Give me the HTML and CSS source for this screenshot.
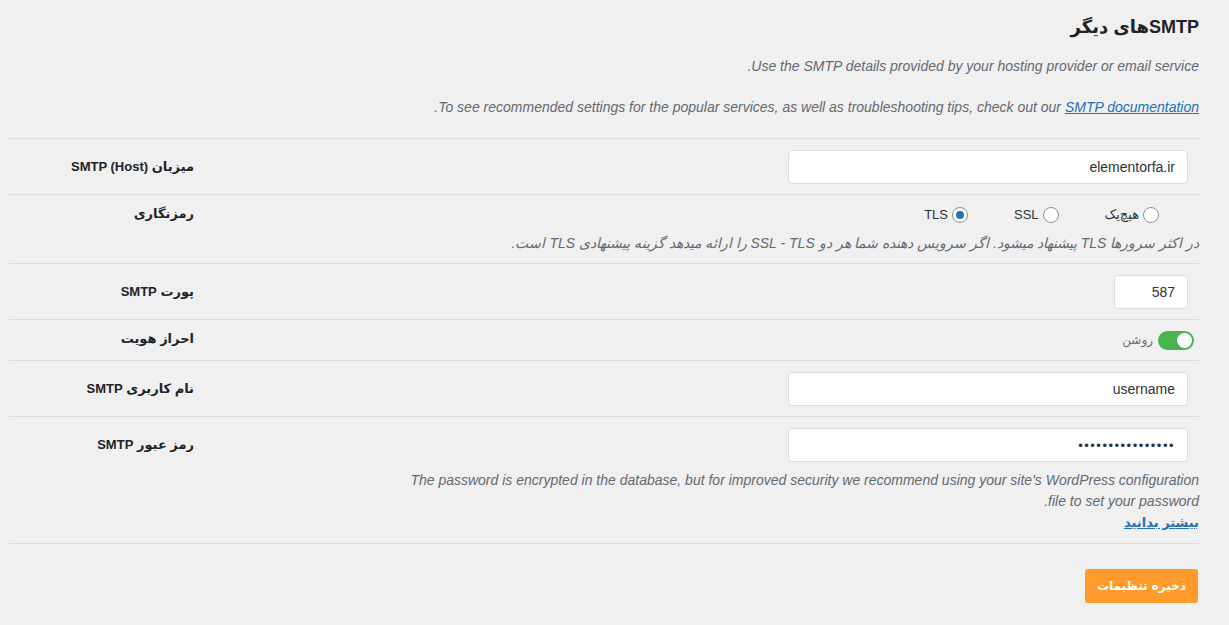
FILE: index.html
```html
<!DOCTYPE html>
<html lang="fa">
<head>
<meta charset="utf-8">
<title>SMTP</title>
<link rel="stylesheet" href="styles.css">
</head>
<body>
<div class="wrap">
  <h2 class="title">SMTPهای دیگر</h2>
  <p class="intro">Use the SMTP details provided by your hosting provider or email service.</p>
  <p class="intro intro-2">To see recommended settings for the popular services, as well as troubleshooting tips, check out our <a href="#">SMTP documentation</a>.</p>

  <div class="form-table">
    <div class="row">
      <div class="label label-input">میزبان SMTP (Host)</div>
      <div class="field field-input"><input class="text-input" type="text" value="elementorfa.ir"></div>
    </div>

    <div class="row">
      <div class="label">رمزنگاری</div>
      <div class="field">
        <div class="radios">
          <label class="radio"><span class="radio-dot"></span><span class="radio-text">هیچ‌یک</span></label>
          <label class="radio"><span class="radio-dot"></span><span class="radio-text">SSL</span></label>
          <label class="radio"><span class="radio-dot checked"></span><span class="radio-text">TLS</span></label>
        </div>
        <p class="desc desc-fa">در اکثر سرورها TLS پیشنهاد میشود. اگر سرویس دهنده شما هر دو SSL - TLS را ارائه میدهد گزینه پیشنهادی TLS است.</p>
      </div>
    </div>

    <div class="row">
      <div class="label label-input">پورت SMTP</div>
      <div class="field field-input"><input class="text-input small" type="text" value="587"></div>
    </div>

    <div class="row">
      <div class="label">احراز هویت</div>
      <div class="field">
        <div class="toggle-wrap">
          <span class="toggle"><span class="knob"></span></span>
          <span class="toggle-text">روشن</span>
        </div>
      </div>
    </div>

    <div class="row">
      <div class="label label-input">نام کاربری SMTP</div>
      <div class="field field-input"><input class="text-input" type="text" value="username"></div>
    </div>

    <div class="row">
      <div class="label label-input">رمز عبور SMTP</div>
      <div class="field field-input">
        <input class="text-input pass" type="password" value="mypassword123456">
        <p class="desc desc-en">The password is encrypted in the database, but for improved security we recommend using your site's WordPress configuration file to set your password.</p>
        <a class="more" href="#">بیشتر بدانید</a>
      </div>
    </div>
  </div>

  <div class="actions">
    <button class="save" type="button">ذخیره تنظیمات</button>
  </div>
</div>
</body>
</html>
```

FILE: styles.css
```css
* { box-sizing: border-box; }

html, body {
  margin: 0;
  padding: 0;
  background: #f0f0f1;
}

body {
  font-family: "Liberation Sans", "DejaVu Sans", sans-serif;
  font-size: 13px;
  color: #1d2327;
}

.wrap {
  padding: 16px 30px 0 9px;
  direction: rtl;
}

.title {
  margin: 0;
  height: 22px;
  font-size: 18px;
  line-height: 22px;
  font-weight: bold;
  color: #1d2327;
}

.intro {
  margin: 18px 0 0;
  height: 20px;
  font-size: 14px;
  line-height: 20px;
  font-style: italic;
  color: #646970;
}

.intro-2 {
  margin-top: 21px;
}

.intro a {
  color: #2271b1;
}

.form-table {
  margin-top: 21px;
  border-top: 1px solid #dcdcde;
}

.row {
  display: grid;
  grid-template-columns: 1fr 185px;
  border-bottom: 1px solid #dcdcde;
}

.label {
  grid-column: 2;
  grid-row: 1;
  height: 28px;
  padding-top: 10px;
  line-height: 18px;
  font-weight: bold;
  font-size: 13px;
  color: #1d2327;
  text-align: right;
}

.label-input {
  height: 45px;
  padding-top: 11px;
  line-height: 34px;
}

.field {
  grid-column: 1;
  grid-row: 1;
  padding: 10px 0 10px;
}

.field-input {
  padding-top: 11px;
}

.text-input {
  display: block;
  width: 400px;
  height: 34px;
  margin-right: 11px;
  padding: 0 12px;
  border: 1px solid #dcdcde;
  border-radius: 4px;
  background: #fff;
  font-family: "Liberation Sans", sans-serif;
  font-size: 14px;
  color: #2c3338;
  text-align: right;
  direction: ltr;
}

.text-input.small {
  width: 74px;
}

.text-input.pass {
  letter-spacing: 1.5px;
  font-size: 13px;
}

.radios {
  display: flex;
  gap: 46px;
  padding-right: 40px;
  height: 20px;
  align-items: center;
}

.radio {
  display: flex;
  align-items: center;
  gap: 4px;
  height: 20px;
  font-size: 13px;
  color: #2c3338;
}

.radio-text {
  line-height: 20px;
  height: 20px;
}

.radio-dot {
  width: 16px;
  height: 16px;
  border: 1px solid #8c8f94;
  border-radius: 50%;
  background: #fff;
  display: inline-flex;
  align-items: center;
  justify-content: center;
}

.radio-dot.checked::after {
  content: "";
  width: 8px;
  height: 8px;
  border-radius: 50%;
  background: #2271b1;
}

.desc {
  margin: 8px 0 0;
  font-size: 14px;
  line-height: 20px;
  font-style: italic;
  color: #646970;
}

.desc-fa {
  height: 20px;
  white-space: nowrap;
}

.desc-en {
  margin-top: 8px;
  line-height: 21px;
  height: 42px;
  max-width: 800px;
}

.toggle-wrap {
  display: flex;
  align-items: center;
  gap: 5px;
  height: 20px;
  padding-right: 5px;
}

.toggle {
  width: 36px;
  height: 19px;
  border-radius: 10px;
  background: #46b450;
  position: relative;
  display: inline-block;
}

.knob {
  position: absolute;
  right: 2px;
  top: 2px;
  width: 15px;
  height: 15px;
  border-radius: 50%;
  background: #fff;
}

.toggle-text {
  font-size: 12px;
  line-height: 20px;
  height: 20px;
  color: #646970;
}

.more {
  display: block;
  height: 21px;
  line-height: 21px;
  font-weight: bold;
  font-size: 13px;
  color: #2271b1;
}

.actions {
  margin-top: 25px;
  display: flex;
}

.save {
  height: 34px;
  padding: 0 12px;
  border: none;
  border-radius: 3px;
  background: #ff9b2c;
  color: #fff;
  font-family: "DejaVu Sans", sans-serif;
  font-weight: bold;
  font-size: 12px;
  margin-right: 1px;
}
```
